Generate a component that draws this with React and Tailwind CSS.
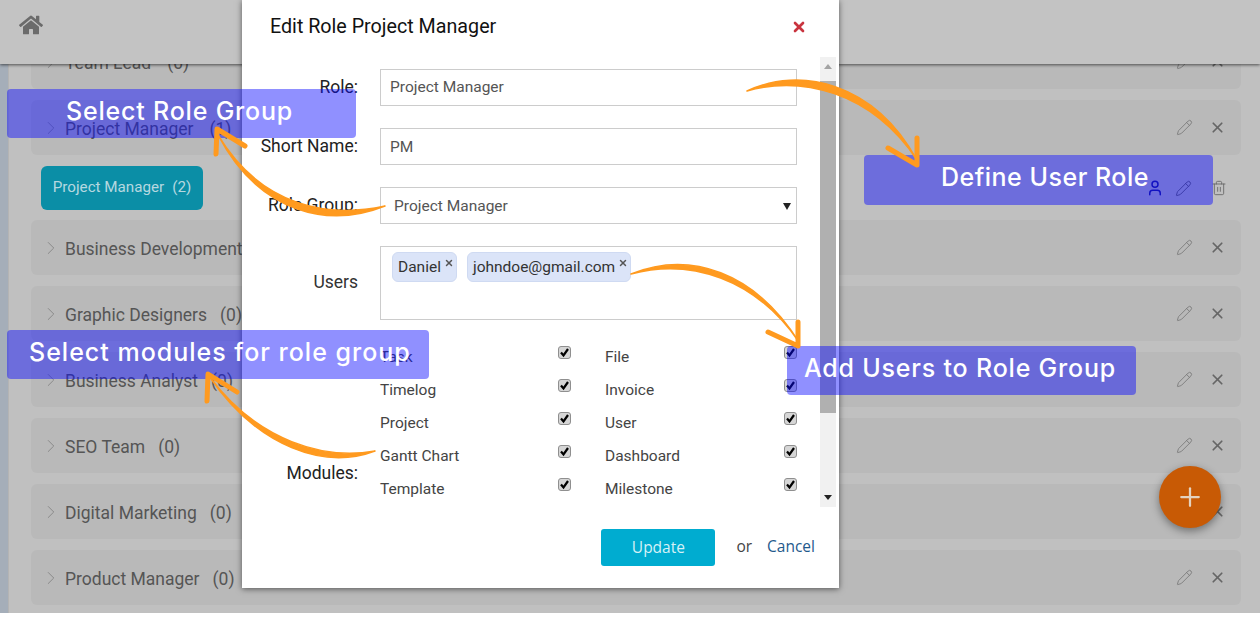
import React from "react";
import { FaHome } from "react-icons/fa";
import { ChevronRight, Pencil, Plus, Trash2, User, X } from "lucide-react";

const groups = [
  { name: "Team Lead", count: 0, gap: "ml-4" },
  { name: "Project Manager", count: 1, gap: "ml-4" },
  { chip: true },
  { name: "Business Development", count: 0, gap: "ml-4" },
  { name: "Graphic Designers", count: 0, gap: "ml-[13px]" },
  { name: "Business Analyst", count: 0, gap: "ml-[13px]" },
  { name: "SEO Team", count: 0, gap: "ml-[13px]" },
  { name: "Digital Marketing", count: 0, gap: "ml-[13px]" },
  { name: "Product Manager", count: 0, gap: "ml-[13px]" },
];

const modules = [
  ["Task", "File"],
  ["Timelog", "Invoice"],
  ["Project", "User"],
  ["Gantt Chart", "Dashboard"],
  ["Template", "Milestone"],
];

const GroupRow = ({ group }) => {
  if (group.chip) {
    return (
      <div className="h-[44px] -mb-px flex items-center pl-[10px]">
        <div className="w-[162px] h-[44px] rounded-md bg-[#0b8ea6] text-[#b5d8e0] text-[15.2px] flex items-center justify-center pb-[2px]">
          Project Manager<span className="ml-2">(2)</span>
        </div>
        <div className="ml-auto flex items-center text-[#666] pr-[14px]">
          <User size={18} strokeWidth={2} className="text-[#1a1a90]" />
          <Pencil size={17} strokeWidth={1.2} className="ml-[11px] text-[#555]" />
          <Trash2 size={16} strokeWidth={1.3} className="ml-[19px]" />
        </div>
      </div>
    );
  }
  return (
    <div className="h-[55px] rounded-md bg-[#b9b9b9] flex items-center pl-[9px] pr-[15px] text-[#555]">
      <ChevronRight size={22} strokeWidth={1} className="text-[#858585]" />
      <span className="ml-[3px] mt-[3px] text-[17.5px]">{group.name}</span>
      <span className={`${group.gap} mt-[3px] text-[17.5px]`}>({group.count})</span>
      <div className="ml-auto flex items-center text-[#666]">
        <Pencil size={17} strokeWidth={1.2} className="text-[#777]" />
        <X size={17} strokeWidth={2.4} className="ml-[16px]" />
      </div>
    </div>
  );
};

const Field = ({ label, children }) => (
  <div className="flex items-center">
    <label className="w-[116px] text-right text-[17.5px] text-[#222]">{label}</label>
    <div className="ml-[22px] w-[417px]">{children}</div>
  </div>
);

const Tag = ({ text }) => (
  <div className="h-[30px] rounded-md bg-[#dbe4f8] border border-[#cfdaf2] pl-[5px] pr-[2px] flex text-[#333] text-[15.5px]">
    <span className="self-center mt-[2px]">{text}</span>
    <X size={10} strokeWidth={3.5} className="ml-[3px] mt-[5px] text-[#555]" />
  </div>
);

const Check = () => (
  <span className="w-[13px] h-[13px] -mt-2 rounded-[3px] bg-[#d6d6d6] border border-[#8f8f8f] flex items-center justify-center">
    <svg width="11" height="11" viewBox="0 0 11 11" fill="none" stroke="#000" strokeWidth="2.2">
      <path d="M2 5.5L4.5 8.5L9 2" />
    </svg>
  </span>
);

const Note = ({ className, children }) => (
  <div className={`absolute z-30 rounded-sm bg-[#0808ff]/45 flex items-center pb-[4px] text-white text-[25px] font-medium font-['Inter',sans-serif] ${className}`}>
    {children}
  </div>
);

export default function App() {
  return (
    <div className="relative w-[1260px] h-[640px] overflow-hidden bg-white font-['Roboto',sans-serif]">
      <div className="h-[613px] overflow-hidden bg-[#c0c0c0]">
        <div className="relative z-10 h-[64px] bg-[#c3c3c3] shadow-[0_1px_3px_rgba(0,0,0,0.6)] flex items-center pl-[19px]">
          <FaHome size={24} className="text-[#6b6b6b] -mt-[14px]" />
        </div>
        <div className="flex h-[549px]">
          <div className="w-[8px] bg-[#a5aeb9] shrink-0" />
          <div className="flex-1 border-l border-[#b4b4b4]">
            <div className="-mt-[30px] pl-[22px] pr-[19px] flex flex-col gap-[11px]">
              {groups.map((group, i) => (
                <GroupRow key={i} group={group} />
              ))}
            </div>
          </div>
        </div>
      </div>

      {/* fab */}
      <div className="absolute z-10 left-[1159px] top-[466px] w-[62px] h-[62px] rounded-full bg-[#c85a05] text-[#e4d2bf] shadow-[0_3px_8px_rgba(0,0,0,0.4)] flex items-center justify-center">
        <Plus size={30} strokeWidth={1.8} />
      </div>

      {/* modal */}
      <div className="absolute z-20 left-[242px] top-0 w-[597px] h-[588px] bg-white shadow-[0_1px_6px_rgba(0,0,0,0.55)] flex flex-col">
        <div className="h-[57px] shrink-0 flex items-center justify-between pl-[28px] pr-[32px] pb-[3px]">
          <h2 className="text-[19.7px] text-[#111]">Edit Role Project Manager</h2>
          <X size={16} strokeWidth={4} className="text-[#c9343f]" />
        </div>
        <div className="flex h-[450px] shrink-0">
          <div className="w-[578px] pt-[12px] flex flex-col gap-[22px]">
            <Field label="Role:">
              <div className="h-[37px] border border-[#ccc] px-[9px] pt-[1px] flex items-center text-[#555] text-[15.5px]">Project Manager</div>
            </Field>
            <Field label="Short Name:">
              <div className="h-[37px] border border-[#ccc] px-[9px] pt-[2px] flex items-center text-[#555] text-[15.5px]">PM</div>
            </Field>
            <Field label="Role Group:">
              <div className="h-[37px] border border-[#ccc] pl-[13px] pr-[5px] pt-[2px] flex items-center justify-between text-[#555] text-[15.5px]">
                Project Manager
                <svg width="8" height="7" viewBox="0 0 8 7"><path d="M0 0h8L4 7z" fill="#222" /></svg>
              </div>
            </Field>
            <div className="flex items-start">
              <label className="w-[116px] text-right text-[17.5px] text-[#333] mt-[23px]">Users</label>
              <div className="ml-[22px] w-[417px] h-[74px] border border-[#ccc] px-[11px] pt-[5px] flex items-start gap-[10px]">
                <Tag text="Daniel" />
                <Tag text="johndoe@gmail.com" />
              </div>
            </div>
            <div className="flex -mt-[2px]">
              <label className="w-[116px] text-right text-[17.5px] text-[#222] pt-[120px]">Modules:</label>
              <div className="ml-[22px] w-[417px] grid grid-cols-[191px_192px] gap-x-[34px]">
                {modules.map(([left, right]) => (
                  <React.Fragment key={left}>
                    <div className="h-[33px] flex items-center justify-between text-[15.5px] text-[#444]">
                      <span className="mt-[2px]">{left}</span>
                      <Check />
                    </div>
                    <div className="h-[33px] flex items-center justify-between text-[15.5px] text-[#444]">
                      <span className="mt-[2px]">{right}</span>
                      <Check />
                    </div>
                  </React.Fragment>
                ))}
              </div>
            </div>
          </div>
          <div className="w-[16px] h-full bg-[#f1f1f1] flex flex-col items-center justify-between pt-[7px] pb-[7px]">
            <svg width="8" height="5" viewBox="0 0 8 5"><path d="M0 5h8L4 0z" fill="#a3a3a3" /></svg>
            <div className="w-full h-[332px] bg-[#b0b0b0] -mt-[70px]" />
            <svg width="8" height="5" viewBox="0 0 8 5"><path d="M0 0h8L4 5z" fill="#222" /></svg>
          </div>
        </div>
        <div className="flex items-start justify-end pt-[22px] pr-[24px] font-['Open_Sans',sans-serif]">
          <button className="w-[114px] h-[37px] rounded-[3px] bg-[#00acd0] text-[#d5f1f7] text-[15.5px]">Update</button>
          <span className="ml-[21px] mt-[6px] text-[15.5px] text-[#444]">or</span>
          <span className="ml-[15px] mt-[6px] text-[15.5px] text-[#1f5a8c]">Cancel</span>
        </div>
      </div>

      {/* callouts */}
      <Note className="left-[7px] top-[89px] w-[349px] h-[49px] pl-[59px] tracking-[0.8px]">Select Role Group</Note>
      <Note className="left-[864px] top-[155px] w-[349px] h-[50px] pl-[77px] tracking-[0.5px]">Define User Role</Note>
      <Note className="left-[7px] top-[330px] w-[422px] h-[49px] pl-[22px] tracking-[1px]">Select modules for role group</Note>
      <Note className="left-[787px] top-[346px] w-[349px] h-[49px] pl-[17px] tracking-[0.8px]">Add Users to Role Group</Note>

      {/* hand drawn arrows */}
      <svg className="absolute z-40 inset-0 pointer-events-none" width="1260" height="640" viewBox="0 0 1260 640" fill="none" stroke="#ff9a1f" strokeWidth="5" strokeLinecap="round" strokeLinejoin="round">
        <path d="M747 91C800 66 874 82 917 160C870 90 800 76 747 91Z" fill="#ff9a1f" strokeWidth="1.5" />
        <path d="M917 138L917 165L888 148" />
        <path d="M385 206C330 228 260 215 218 135C262 208 330 218 385 206Z" fill="#ff9a1f" strokeWidth="1.5" />
        <path d="M216 154L217 129L245 146" />
        <path d="M631 274C690 250 755 272 799 342C755 278 690 258 631 274Z" fill="#ff9a1f" strokeWidth="1.5" />
        <path d="M798 322L798 346L768 332" />
        <path d="M375 451C325 470 258 448 209 376C258 442 325 460 375 451Z" fill="#ff9a1f" strokeWidth="1.5" />
        <path d="M207 401L208 374L237 392" />
      </svg>
    </div>
  );
}
